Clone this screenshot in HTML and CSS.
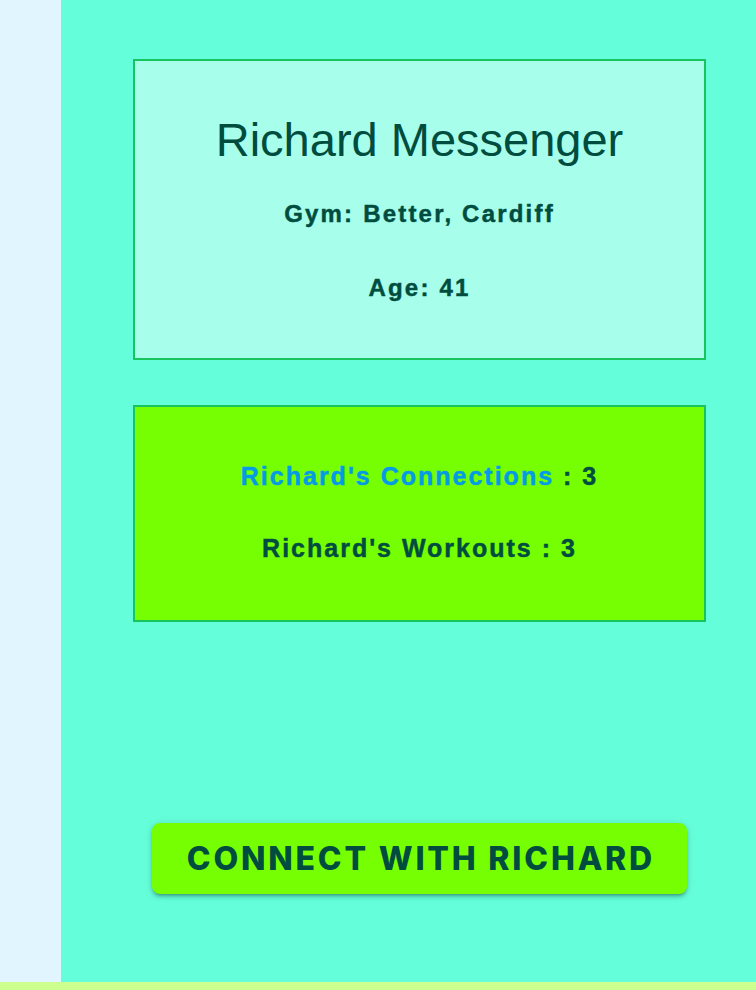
FILE: index.html
```html
<!DOCTYPE html>
<html lang="en">
<head>
<meta charset="utf-8">
<title>Richard Messenger</title>
<link rel="stylesheet" href="styles.css">
</head>
<body>
<div class="page">
  <aside class="sidebar"></aside>
  <main class="main">
    <div class="column">
      <section class="card card-info">
        <h1 class="name">Richard Messenger</h1>
        <h3 class="detail detail-gym">Gym: Better, Cardiff</h3>
        <h3 class="detail detail-age">Age: 41</h3>
      </section>
      <section class="card card-stats">
        <h3 class="stat stat-connections"><a class="stat-link" href="#">Richard's Connections</a> : 3</h3>
        <h3 class="stat stat-workouts">Richard's Workouts : 3</h3>
      </section>
      <div class="actions">
        <button class="connect-btn" type="button">Connect with Richard</button>
      </div>
    </div>
  </main>
</div>
</body>
</html>
```

FILE: styles.css
```css
html, body {
  margin: 0;
  padding: 0;
}
body {
  background: #ccff90;
  font-family: "Liberation Sans", Arial, Helvetica, sans-serif;
  color: #004d40;
}
.page {
  display: flex;
  height: 982px;
  overflow: hidden;
}
.sidebar {
  flex: 0 0 61px;
  background: #e1f5fe;
}
.main {
  flex: 1 1 auto;
  background: #64ffda;
  padding: 59px 0 0 72px;
}
.column {
  width: 573px;
  display: flex;
  flex-direction: column;
}
.card {
  border: 2px solid #17c45e;
  display: flex;
  flex-direction: column;
  align-items: center;
  text-align: center;
}
.card-info {
  background: #a7ffeb;
  height: 245px;
  padding-top: 52px;
}
.card-stats {
  background: #76ff03;
  margin-top: 45px;
  height: 213px;
}
.name {
  margin: 0;
  font-size: 47px;
  line-height: 54px;
  font-weight: 400;
}
.detail {
  margin: 0;
  font-size: 24px;
  line-height: 28px;
  font-weight: 700;
  letter-spacing: 2.2px;
  -webkit-text-stroke: 0.45px #004d40;
}
.detail-gym {
  margin-top: 33px;
}
.detail-age {
  margin-top: 46px;
}
.stat {
  margin: 0;
  font-size: 25px;
  line-height: 30px;
  font-weight: 700;
  letter-spacing: 2px;
  -webkit-text-stroke: 0.45px #004d40;
}
.stat-connections {
  margin-top: 54px;
}
.stat-workouts {
  margin-top: 42px;
}
.stat-link {
  color: #039be5;
  text-decoration: none;
  -webkit-text-stroke: 0.45px #039be5;
}
.actions {
  display: flex;
  justify-content: center;
  margin-top: 201px;
}
.connect-btn {
  width: 535px;
  height: 71px;
  border: none;
  border-radius: 8px;
  background: #76ff03;
  color: #004d40;
  font-family: Inter, Roboto, "Liberation Sans", sans-serif;
  font-weight: 800;
  font-size: 32px;
  text-transform: uppercase;
  letter-spacing: 2.8px;
  box-shadow: 0 3px 3px -2px rgba(0,0,0,0.25), 0 3px 4px 0 rgba(0,0,0,0.16), 0 1px 8px 0 rgba(0,0,0,0.12);
  cursor: pointer;
  padding: 0 0 0 2.8px;
}
```
